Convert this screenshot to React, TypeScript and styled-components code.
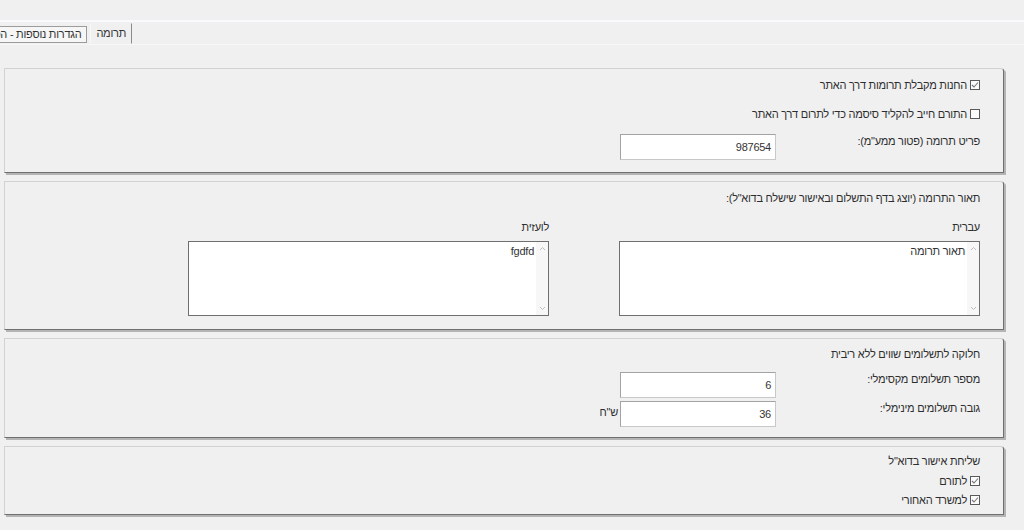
import React from "react";
import styled, {createGlobalStyle} from "styled-components";

const GlobalStyle = createGlobalStyle`
  html, body {
    margin: 0;
    padding: 0;
    background: #f0f0f0;
  }
  body {
    font-family: "Liberation Sans", Arial, "DejaVu Sans", sans-serif;
    font-size: 11px;
    letter-spacing: -0.25px;
    color: #2e2e2e;
  }
`;

const Page = styled.div`
  direction: rtl;
  width: 1024px;
  height: 530px;
  overflow: hidden;
  background: #f0f0f0;
`;

const TabBar = styled.div`
  margin-top: 20px;
  border-top: 2px solid #fafafd;
  height: 22px;
  display: flex;
  justify-content: flex-end;
  border-bottom: 1px solid #f7f7f7;
`;

const TabGroup = styled.div`
  width: 132px;
  overflow: hidden;
  display: flex;
  align-items: flex-end;
  white-space: nowrap;
`;

const Tab = styled.div<{$active?: boolean}>`
  flex-shrink: 0;
  box-sizing: border-box;
  height: ${(p) => (p.$active ? "21px" : "17px")};
  line-height: ${(p) => (p.$active ? "18px" : "15px")};
  padding: 0 5px;
  margin-bottom: ${(p) => (p.$active ? "0" : "1px")};
  background: ${(p) => (p.$active ? "#f0f0f0" : "#f6f6f6")};
  border: 1px solid ${(p) => (p.$active ? "transparent" : "#9c9c9c")};
  border-right: 1px solid ${(p) => (p.$active ? "#8a8a8a" : "#9c9c9c")};
  border-left: ${(p) => (p.$active ? "1px solid #f8f8f8" : "1px solid #9c9c9c")};
  margin-left: ${(p) => (p.$active ? "3px" : "0")};
  color: #333;
`;

const Content = styled.div`
  margin-top: 23px;
  padding: 0 20px 0 4px;
  display: flex;
  flex-direction: column;
  gap: 8px;
`;

const Panel = styled.section<{$pt: number; $pb: number}>`
  box-sizing: border-box;
  background: #f0f0f0;
  border: 1px solid;
  border-color: #d2d2d2 #6f6f6f #6f6f6f #d2d2d2;
  border-radius: 0 3px 0 0;
  box-shadow: 2px 2px 0 #b4b4b4;
  padding: ${(p) => p.$pt}px 23px ${(p) => p.$pb}px 16px;
  display: flex;
  flex-direction: column;
`;

const Line = styled.div<{$mt?: number}>`
  height: 18px;
  line-height: 18px;
  margin-top: ${(p) => p.$mt ?? 0}px;
  display: flex;
  align-items: center;
  gap: 3px;
  white-space: nowrap;
`;

const Box = styled.span`
  box-sizing: border-box;
  width: 10px;
  height: 10px;
  border: 1px solid #5a5a5a;
  background: #fbfbfb;
  display: inline-flex;
  align-items: center;
  justify-content: center;
`;

const FieldRow = styled.div<{$mt?: number}>`
  margin-top: ${(p) => p.$mt ?? 0}px;
  display: flex;
  align-items: flex-start;
`;

const FieldLabel = styled.div`
  width: 204px;
  line-height: 14px;
  white-space: nowrap;
`;

const Input = styled.div`
  box-sizing: border-box;
  width: 156px;
  height: 26px;
  background: #fff;
  border: 1px solid;
  border-color: #a3a3a3 #c8c8c8 #c8c8c8 #a3a3a3;
  padding: 5px 4px 0;
  line-height: 14px;
  color: #333;
`;

const Unit = styled.span`
  padding: 4px 2px 0 0;
  line-height: 14px;
`;

const Columns = styled.div`
  display: flex;
  gap: 70px;
  margin-top: 11px;
`;

const Column = styled.div`
  width: 361px;
  display: flex;
  flex-direction: column;
`;

const ColLabel = styled.div`
  height: 18px;
  line-height: 18px;
  margin-bottom: 5px;
`;

const TextBox = styled.div`
  box-sizing: border-box;
  height: 75px;
  background: #fff;
  border: 1px solid #6f6f6f;
  display: flex;
`;

const Scroll = styled.div`
  width: 12px;
  background: #f7f7f7;
  display: flex;
  flex-direction: column;
  justify-content: space-between;
  align-items: center;
  padding: 4px 0;
`;

const TextBody = styled.div`
  flex: 1;
  padding: 2px 2px;
  line-height: 14px;
  color: #333;
`;

const Check = ({checked}: {checked?: boolean}) => (
  <Box>
    {checked && (
      <svg width="8" height="8" viewBox="0 0 8 8">
        <path d="M1 4 L3 6 L7 1.5" fill="none" stroke="#777" strokeWidth="1.1" />
      </svg>
    )}
  </Box>
);

const CheckRow = ({checked, mt, children}: {checked?: boolean; mt?: number; children: React.ReactNode}) => (
  <Line $mt={mt}>
    <Check checked={checked} />
    <span>{children}</span>
  </Line>
);

const Chevron = ({up}: {up?: boolean}) => (
  <svg width="7" height="5" viewBox="0 0 7 5">
    <path d={up ? "M1 4 L3.5 1.5 L6 4" : "M1 1 L3.5 3.5 L6 1"} fill="none" stroke="#bdbdbd" strokeWidth="1" />
  </svg>
);

const TextArea = ({value}: {value: string}) => (
  <TextBox dir="ltr">
    <TextBody dir="rtl">{value}</TextBody>
    <Scroll>
      <Chevron up />
      <Chevron />
    </Scroll>
  </TextBox>
);

export default function App() {
  return (
    <>
      <GlobalStyle />
      <Page>
        <TabBar>
          <TabGroup>
            <Tab $active>תרומה</Tab>
            <Tab>הגדרות נוספות - הסליקה</Tab>
          </TabGroup>
        </TabBar>
        <Content>
          <Panel $pt={7} $pb={12}>
            <CheckRow checked>החנות מקבלת תרומות דרך האתר</CheckRow>
            <CheckRow mt={11}>התורם חייב להקליד סיסמה כדי לתרום דרך האתר</CheckRow>
            <FieldRow $mt={11}>
              <FieldLabel>פריט תרומה (פטור ממע"מ):</FieldLabel>
              <Input>987654</Input>
            </FieldRow>
          </Panel>
          <Panel $pt={7} $pb={13}>
            <Line>תאור התרומה (יוצג בדף התשלום ובאישור שישלח בדוא"ל):</Line>
            <Columns>
              <Column>
                <ColLabel>עברית</ColLabel>
                <TextArea value="תאור תרומה" />
              </Column>
              <Column>
                <ColLabel>לועזית</ColLabel>
                <TextArea value="fgdfd" />
              </Column>
            </Columns>
          </Panel>
          <Panel $pt={6} $pb={10}>
            <Line>חלוקה לתשלומים שווים ללא ריבית</Line>
            <FieldRow $mt={9}>
              <FieldLabel>מספר תשלומים מקסימלי:</FieldLabel>
              <Input>6</Input>
            </FieldRow>
            <FieldRow $mt={3}>
              <FieldLabel>גובה תשלומים מינימלי:</FieldLabel>
              <Input>36</Input>
              <Unit>ש"ח</Unit>
            </FieldRow>
          </Panel>
          <Panel $pt={5} $pb={5}>
            <Line>שליחת אישור בדוא"ל</Line>
            <CheckRow checked mt={2}>לתורם</CheckRow>
            <CheckRow checked mt={1}>למשרד האחורי</CheckRow>
          </Panel>
        </Content>
      </Page>
    </>
  );
}
